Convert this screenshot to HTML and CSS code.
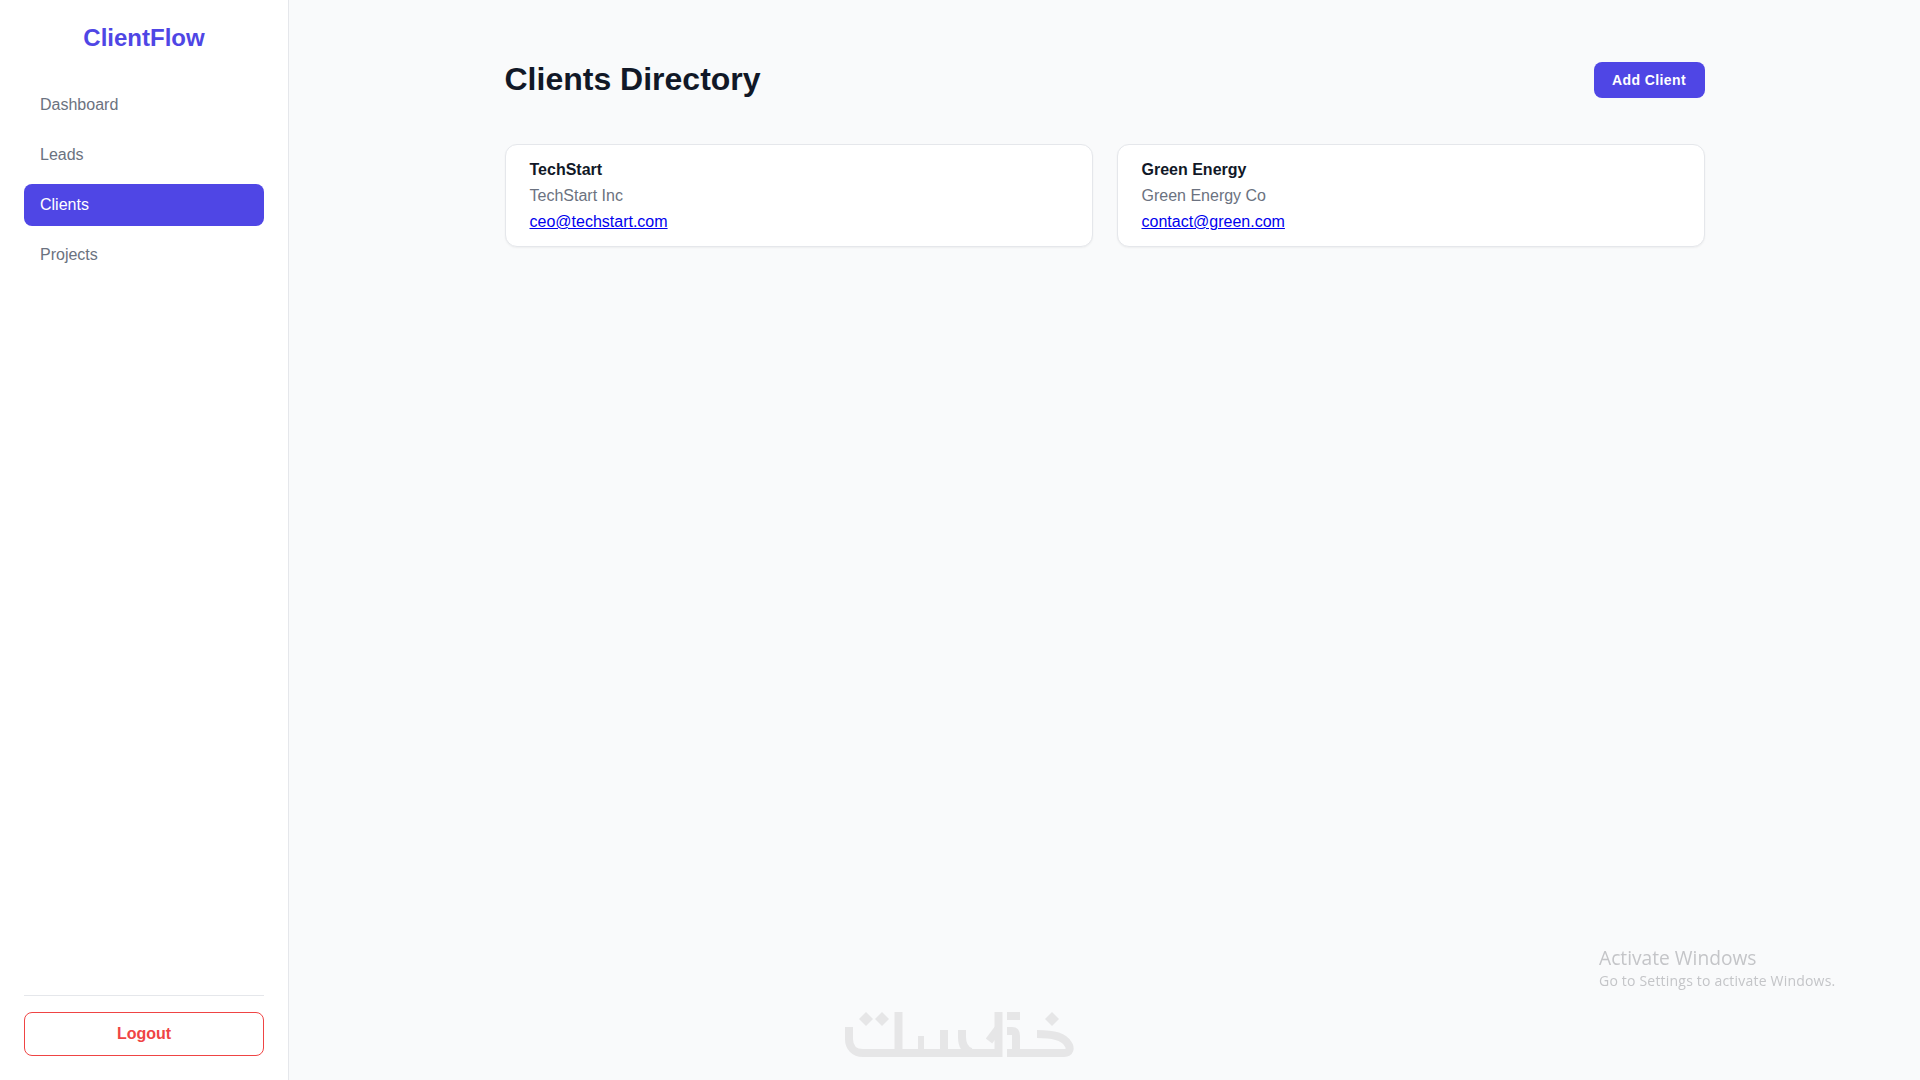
FILE: index.html
```html
<!DOCTYPE html>
<html lang="en">
<head>
<meta charset="utf-8">
<title>ClientFlow</title>
<link rel="stylesheet" href="styles.css">
</head>
<body>
<div class="app">
  <aside class="sidebar">
    <div class="brand">ClientFlow</div>
    <nav class="nav">
      <a class="nav-item" href="#">Dashboard</a>
      <a class="nav-item" href="#">Leads</a>
      <a class="nav-item active" href="#">Clients</a>
      <a class="nav-item" href="#">Projects</a>
    </nav>
    <div class="sidebar-foot">
      <button class="logout">Logout</button>
    </div>
  </aside>
  <main class="main">
    <div class="content">
      <header class="head">
        <h1 class="title">Clients Directory</h1>
        <button class="add">Add Client</button>
      </header>
      <section class="grid">
        <article class="card">
          <div class="name">TechStart</div>
          <div class="company">TechStart Inc</div>
          <a class="mail" href="#">ceo@techstart.com</a>
        </article>
        <article class="card">
          <div class="name">Green Energy</div>
          <div class="company">Green Energy Co</div>
          <a class="mail" href="#">contact@green.com</a>
        </article>
      </section>
    </div>
  </main>
</div>
<svg class="mark" viewBox="0 0 230 46" width="230" height="46" role="img" aria-label="Khamsat logo">
  <g fill="none" stroke="#e6e6e7" stroke-width="8">
    <path d="M4 15V27C4 35 9 41 18 41H153"/>
    <path d="M53.500 0V38"/>
    <path d="M99 18V38"/>
    <path d="M117 18V25C117 33 120 38 126 40"/>
    <path d="M153.500 0V45"/>
    <path d="M144 29L153 17"/>
    <path d="M162 4H175"/>
    <path d="M162 19H167C170 19 171 21 171 24V40"/>
    <path d="M162 41H219C225 41 226 36 223 32C219 25 210 22 192 22"/>
  </g>
  <path d="M76 24V38" fill="none" stroke="#e6e6e7" stroke-width="6"/>
  <g fill="#e6e6e7">
    <path d="M21 0L28 7L21 14L14 7Z"/>
    <path d="M37 0L44 7L37 14L30 7Z"/>
    <path d="M207 0L214 7L207 14L200 7Z"/>
  </g>
</svg>
<div class="activate">
  <div class="activate-title">Activate Windows</div>
  <div class="activate-sub">Go to Settings to activate Windows.</div>
</div>
</body>
</html>
```
FILE: styles.css
```css
* { box-sizing: border-box; }
html, body { margin: 0; height: 100%; }
body {
  font-family: "Liberation Sans", Arial, sans-serif;
  font-size: 16px;
  line-height: 1.6;
  background: #f9fafb;
  color: #111827;
}
.app { display: flex; height: 1080px; overflow: hidden; }
.sidebar {
  width: 289px;
  flex: none;
  display: flex;
  flex-direction: column;
  padding: 25px 24px 24px;
  background: #fff;
  border-right: 1px solid #e5e7eb;
}
.brand {
  font-size: 24px;
  font-weight: 700;
  line-height: 26px;
  color: #4f46e5;
  text-align: center;
  margin-bottom: 33px;
}
.nav { display: flex; flex-direction: column; gap: 8px; flex: 1; }
.nav-item {
  display: block;
  padding: 8px 16px;
  line-height: 26px;
  border-radius: 8px;
  color: #6b7280;
  text-decoration: none;
}
.nav-item.active { background: #4f46e5; color: #fff; }
.sidebar-foot { border-top: 1px solid #e5e7eb; padding-top: 16px; }
.logout {
  display: block;
  width: 100%;
  height: 44px;
  padding: 0;
  background: #fff;
  border: 1px solid #ef4444;
  border-radius: 8px;
  color: #ef4444;
  font: 700 16px "Liberation Sans", Arial, sans-serif;
}
.main { flex: 1; min-width: 0; padding: 61px 0 0; }
.content { width: 1200px; margin: 0 auto; }
.head { display: flex; justify-content: space-between; align-items: center; margin-bottom: 46px; }
.title { margin: 0; padding-bottom: 1px; font-size: 32px; font-weight: 700; line-height: 36px; color: #111827; }
.add {
  height: 36px;
  width: 111px;
  padding: 0;
  border: 0;
  border-radius: 8px;
  background: #4f46e5;
  color: #fff;
  font: 700 14px "Liberation Sans", Arial, sans-serif;
  letter-spacing: 0.4px;
}
.grid { display: grid; grid-template-columns: 1fr 1fr; gap: 24px; }
.card {
  background: #fff;
  border: 1px solid #e5e7eb;
  border-radius: 12px;
  padding: 12px 24px 11px;
  line-height: 26px;
  box-shadow: 0 1px 2px rgba(0,0,0,.05);
}
.name { font-weight: 700; color: #111827; }
.company { color: #6b7280; }
.mail { display: block; color: #0000ee; text-decoration: underline; }
.mark { position: fixed; left: 845px; top: 1012px; }
.activate {
  position: fixed;
  left: 1599px;
  top: 944px;
  font-family: "Open Sans", sans-serif;
  font-weight: 400;
  color: #c4c5c8;
}
.activate-title { font-size: 19.2px; line-height: 28px; }
.activate-sub { font-size: 14px; line-height: 18px; letter-spacing: 0.2px; }
```
